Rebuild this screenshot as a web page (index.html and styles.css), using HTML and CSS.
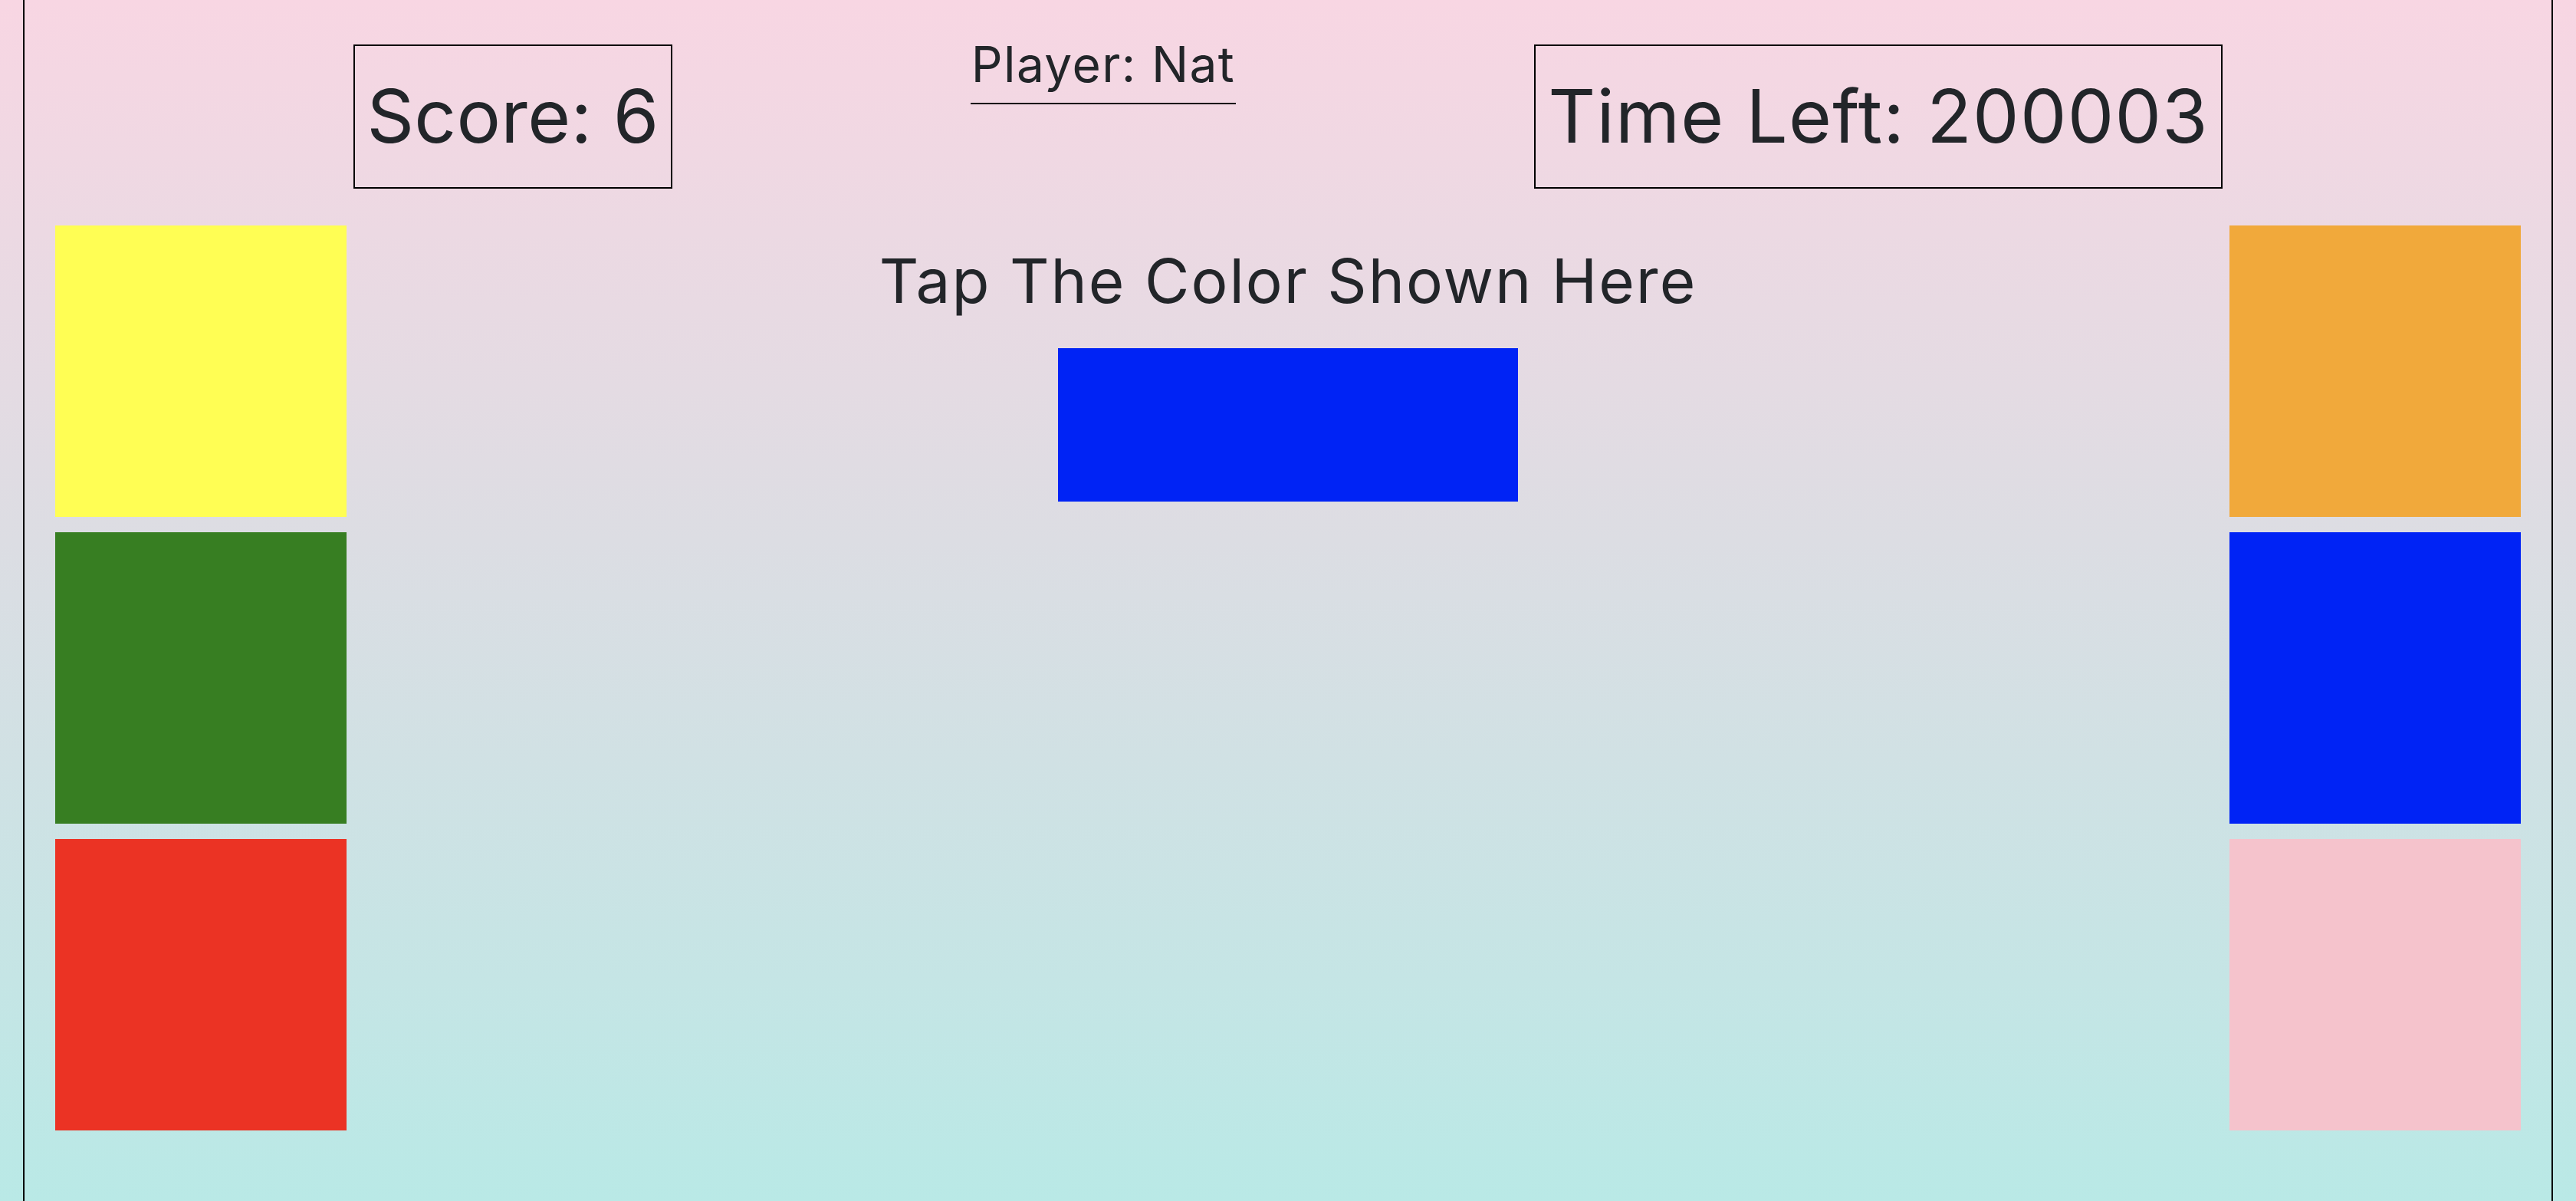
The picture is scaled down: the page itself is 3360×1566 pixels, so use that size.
FILE: index.html
```html
<!DOCTYPE html>
<html lang="en">
<head>
<meta charset="utf-8">
<title>Color Tap</title>
<link rel="stylesheet" href="styles.css">
</head>
<body>
<div class="game">
  <header class="header">
    <div class="stat stat-score">Score: 6</div>
    <div class="player">Player: Nat</div>
    <div class="stat stat-time">Time Left: 200003</div>
  </header>
  <main class="board">
    <div class="column">
      <div class="swatch swatch-yellow"></div>
      <div class="swatch swatch-green"></div>
      <div class="swatch swatch-red"></div>
    </div>
    <div class="center">
      <h2 class="prompt">Tap The Color Shown Here</h2>
      <div class="target target-blue"></div>
    </div>
    <div class="column">
      <div class="swatch swatch-orange"></div>
      <div class="swatch swatch-blue"></div>
      <div class="swatch swatch-pink"></div>
    </div>
  </main>
</div>
</body>
</html>
```

FILE: styles.css
```css
* {
  box-sizing: border-box;
}

html,
body {
  margin: 0;
  padding: 0;
}

body {
  min-height: 1566px;
  background: linear-gradient(to bottom, #f8d6e3 0%, #dcdde3 45%, #b9e9e6 100%);
  color: #222529;
  font-family: Inter, "Open Sans", "Liberation Sans", sans-serif;
  font-weight: 400;
}

.game {
  margin: 0 30px;
  min-height: 1566px;
  border-left: 2px solid #000;
  border-right: 2px solid #000;
  padding: 0 40px;
}

.header {
  display: flex;
  justify-content: space-evenly;
  align-items: flex-start;
  padding-top: 38px;
}

.stat {
  margin-top: 20px;
  height: 188px;
  border: 2px solid #000;
  display: flex;
  align-items: center;
  justify-content: center;
  font-size: 96px;
  line-height: 1.2;
  white-space: nowrap;
}

.stat-score {
  width: 416px;
  letter-spacing: 0.3px;
}

.stat-time {
  width: 898px;
  letter-spacing: 1.2px;
}

.player {
  width: 346px;
  text-align: center;
  font-size: 64px;
  line-height: 1.2;
  letter-spacing: 1.4px;
  padding-top: 8px;
  padding-bottom: 11px;
  border-bottom: 2px solid #000;
  white-space: nowrap;
}

.board {
  display: flex;
  justify-content: space-between;
  align-items: flex-start;
  margin-top: 48px;
}

.column {
  display: flex;
  flex-direction: column;
  gap: 20px;
}

.swatch {
  width: 380px;
  height: 380px;
}

.center {
  flex: 1;
  display: flex;
  flex-direction: column;
  align-items: center;
}

.prompt {
  margin: 24px 0 0;
  font-size: 80px;
  font-weight: 400;
  line-height: 1.2;
  letter-spacing: 2px;
  white-space: nowrap;
}

.target {
  margin-top: 40px;
  width: 600px;
  height: 200px;
}

.swatch-yellow { background: #fffe54; }
.swatch-green { background: #377e22; }
.swatch-red { background: #eb3324; }
.swatch-orange { background: #f1a93b; }
.swatch-blue,
.target-blue { background: #0023f5; }
.swatch-pink { background: #f5c3cc; }
```
